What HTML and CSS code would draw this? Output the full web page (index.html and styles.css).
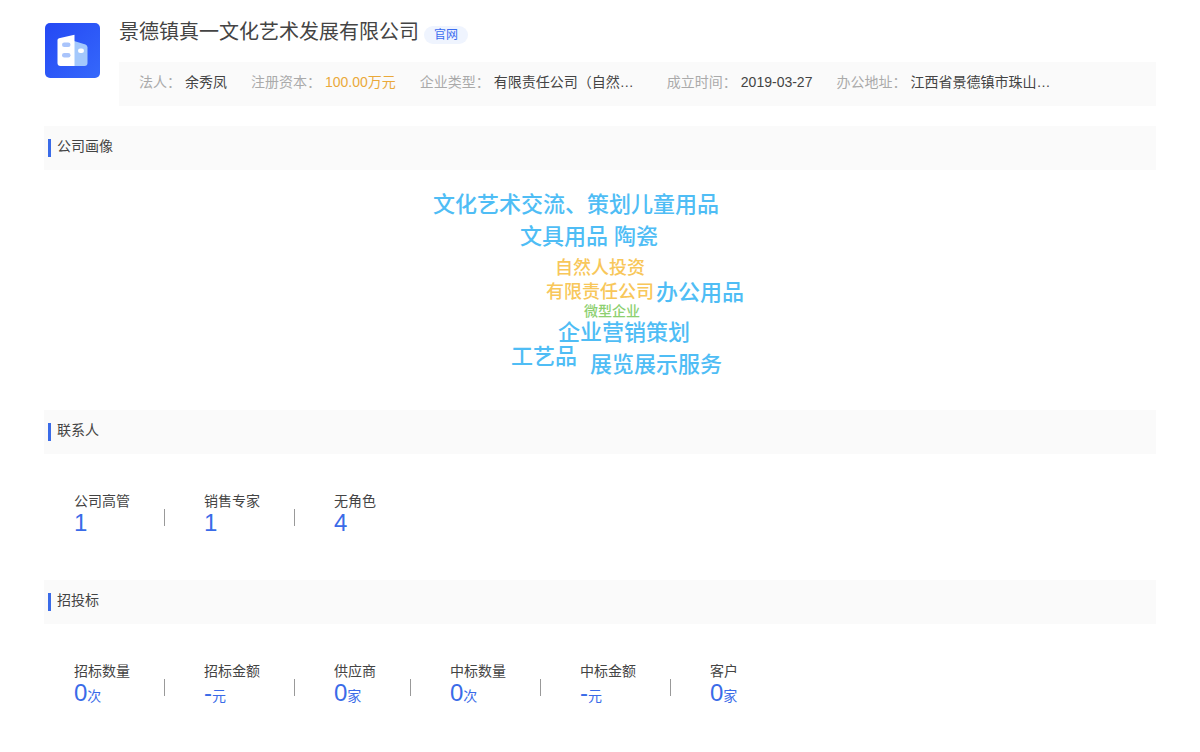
FILE: index.html
```html
<!DOCTYPE html>
<html lang="zh-CN">
<head>
<meta charset="utf-8">
<title>景德镇真一文化艺术发展有限公司</title>
<link rel="stylesheet" href="styles.css">
</head>
<body>
<main class="page">
  <header class="company">
    <svg class="logo" viewBox="0 0 55 55" aria-hidden="true">
      <defs>
        <linearGradient id="bg" x1="0" y1="0" x2="1" y2="1">
          <stop offset="0" stop-color="#2448f4"/>
          <stop offset="1" stop-color="#3568fb"/>
        </linearGradient>
      </defs>
      <rect width="55" height="55" rx="5" fill="url(#bg)"/>
      <path d="M29 18L40.500 21.500Q42.500 22.300 42.500 24.500V40Q42.500 43 39.500 43H29Z" fill="#a3c8fc"/>
      <path d="M14 15.200L29.500 11.800V43H15.500Q12.500 43 12.500 40V17Q12.500 15.600 14 15.200Z" fill="#fff"/>
      <rect x="17" y="19.500" width="8.500" height="4.500" rx="2.250" fill="#a9c4fb"/>
      <rect x="17" y="30" width="8.500" height="4.500" rx="2.250" fill="#a9c4fb"/>
      <rect x="33" y="25.500" width="6" height="4.500" rx="2.250" fill="#fff"/>
    </svg>
    <div class="company-main">
      <div class="title-row">
        <h1 class="title">景德镇真一文化艺术发展有限公司</h1>
        <a class="site-link" href="#">官网</a>
      </div>
      <dl class="info">
        <div class="info-item"><dt>法人：</dt><dd>余秀凤</dd></div>
        <div class="info-item"><dt>注册资本：</dt><dd class="money">100.00万元</dd></div>
        <div class="info-item"><dt>企业类型：</dt><dd class="clip">有限责任公司（自然…</dd></div>
        <div class="info-item"><dt>成立时间：</dt><dd>2019-03-27</dd></div>
        <div class="info-item"><dt>办公地址：</dt><dd class="clip">江西省景德镇市珠山…</dd></div>
      </dl>
    </div>
  </header>

  <section>
    <h2 class="section-title">公司画像</h2>
    <div class="cloud">
      <span class="word large w1">文化艺术交流、策划儿童用品</span>
      <span class="word large w2">文具用品 陶瓷</span>
      <span class="word medium w3">自然人投资</span>
      <span class="word medium w4">有限责任公司</span>
      <span class="word large w5">办公用品</span>
      <span class="word small w6">微型企业</span>
      <span class="word large w7">企业营销策划</span>
      <span class="word large w8">工艺品</span>
      <span class="word large w9">展览展示服务</span>
    </div>
  </section>

  <section>
    <h2 class="section-title">联系人</h2>
    <dl class="stats">
      <div class="stat"><dt>公司高管</dt><dd>1</dd></div>
      <div class="stat"><dt>销售专家</dt><dd>1</dd></div>
      <div class="stat"><dt>无角色</dt><dd>4</dd></div>
    </dl>
  </section>

  <section>
    <h2 class="section-title">招投标</h2>
    <dl class="stats">
      <div class="stat"><dt>招标数量</dt><dd>0<small>次</small></dd></div>
      <div class="stat"><dt>招标金额</dt><dd>-<small>元</small></dd></div>
      <div class="stat"><dt>供应商</dt><dd>0<small>家</small></dd></div>
      <div class="stat"><dt>中标数量</dt><dd>0<small>次</small></dd></div>
      <div class="stat"><dt>中标金额</dt><dd>-<small>元</small></dd></div>
      <div class="stat"><dt>客户</dt><dd>0<small>家</small></dd></div>
    </dl>
  </section>
</main>
</body>
</html>
```
FILE: styles.css
```css
* { box-sizing: border-box; }

body {
  margin: 0;
  background: #fff;
  color: #444;
  font: 14px/20px "Liberation Sans", "Noto Sans CJK SC", sans-serif;
}

h1, h2, dl, dd { margin: 0; font-weight: 400; }

.page { padding: 16px 44px 0; }

.company { display: flex; gap: 19px; padding-left: 1px; margin-bottom: 20px; }
.logo { flex: none; width: 55px; height: 55px; margin-top: 7px; }
.company-main { flex: 1; min-width: 0; }

.title-row { display: flex; align-items: flex-start; gap: 5px; height: 46px; }
.title { font-size: 20px; line-height: 32px; }
.site-link {
  margin-top: 10px;
  padding: 0 10px;
  border-radius: 9px;
  background: #eff4fe;
  color: #3b6cf0;
  font-size: 12px;
  line-height: 18px;
  text-decoration: none;
}

.info {
  display: flex;
  gap: 24px;
  padding: 10px 20px 14px;
  background: #fafafa;
  white-space: nowrap;
}
.info-item { display: flex; gap: 4px; }
.info dt { color: #aaa; }
.info .money { color: #eaa93a; }
.clip { width: 149px; overflow: hidden; text-overflow: ellipsis; }

.section-title {
  display: flex;
  align-items: flex-start;
  gap: 6px;
  padding: 10px 4px 13px;
  background: #fafafa;
  font-size: 14px;
  line-height: 20px;
}
.section-title::before {
  content: "";
  width: 3px;
  height: 18px;
  margin-top: 3px;
  background: #3a6be8;
}

.cloud { position: relative; height: 240px; }
.word { position: absolute; white-space: nowrap; font-weight: 500; }
.large { color: #4fbdf5; font-size: 22px; line-height: 32px; }
.medium { color: #f8c75a; font-size: 18px; line-height: 26px; }
.small { color: #8dd070; font-size: 14px; line-height: 20px; }
.w1 { left: calc(50% - 167px); top: 19px; }
.w2 { left: calc(50% - 80px); top: 51px; }
.w3 { left: calc(50% - 45px); top: 85px; }
.w4 { left: calc(50% - 54px); top: 109px; }
.w5 { left: calc(50% + 56px); top: 107px; }
.w6 { left: calc(50% - 16px); top: 131px; }
.w7 { left: calc(50% - 42px); top: 147px; }
.w8 { left: calc(50% - 89px); top: 171px; }
.w9 { left: calc(50% - 10px); top: 179px; }

.stats { display: flex; padding: 36px 30px 44px; }
.stat { display: flex; flex-direction: column; position: relative; padding-right: 74px; }
.stat dt { line-height: 22px; }
.stat dd { height: 24px; color: #3a6be8; font-size: 24px; line-height: 22px; }
.stat small { font-size: 14px; line-height: 14px; }
.stat:not(:last-child)::after {
  content: "";
  position: absolute;
  right: 39px;
  top: 19px;
  width: 1px;
  height: 17px;
  background: #999;
}
```
